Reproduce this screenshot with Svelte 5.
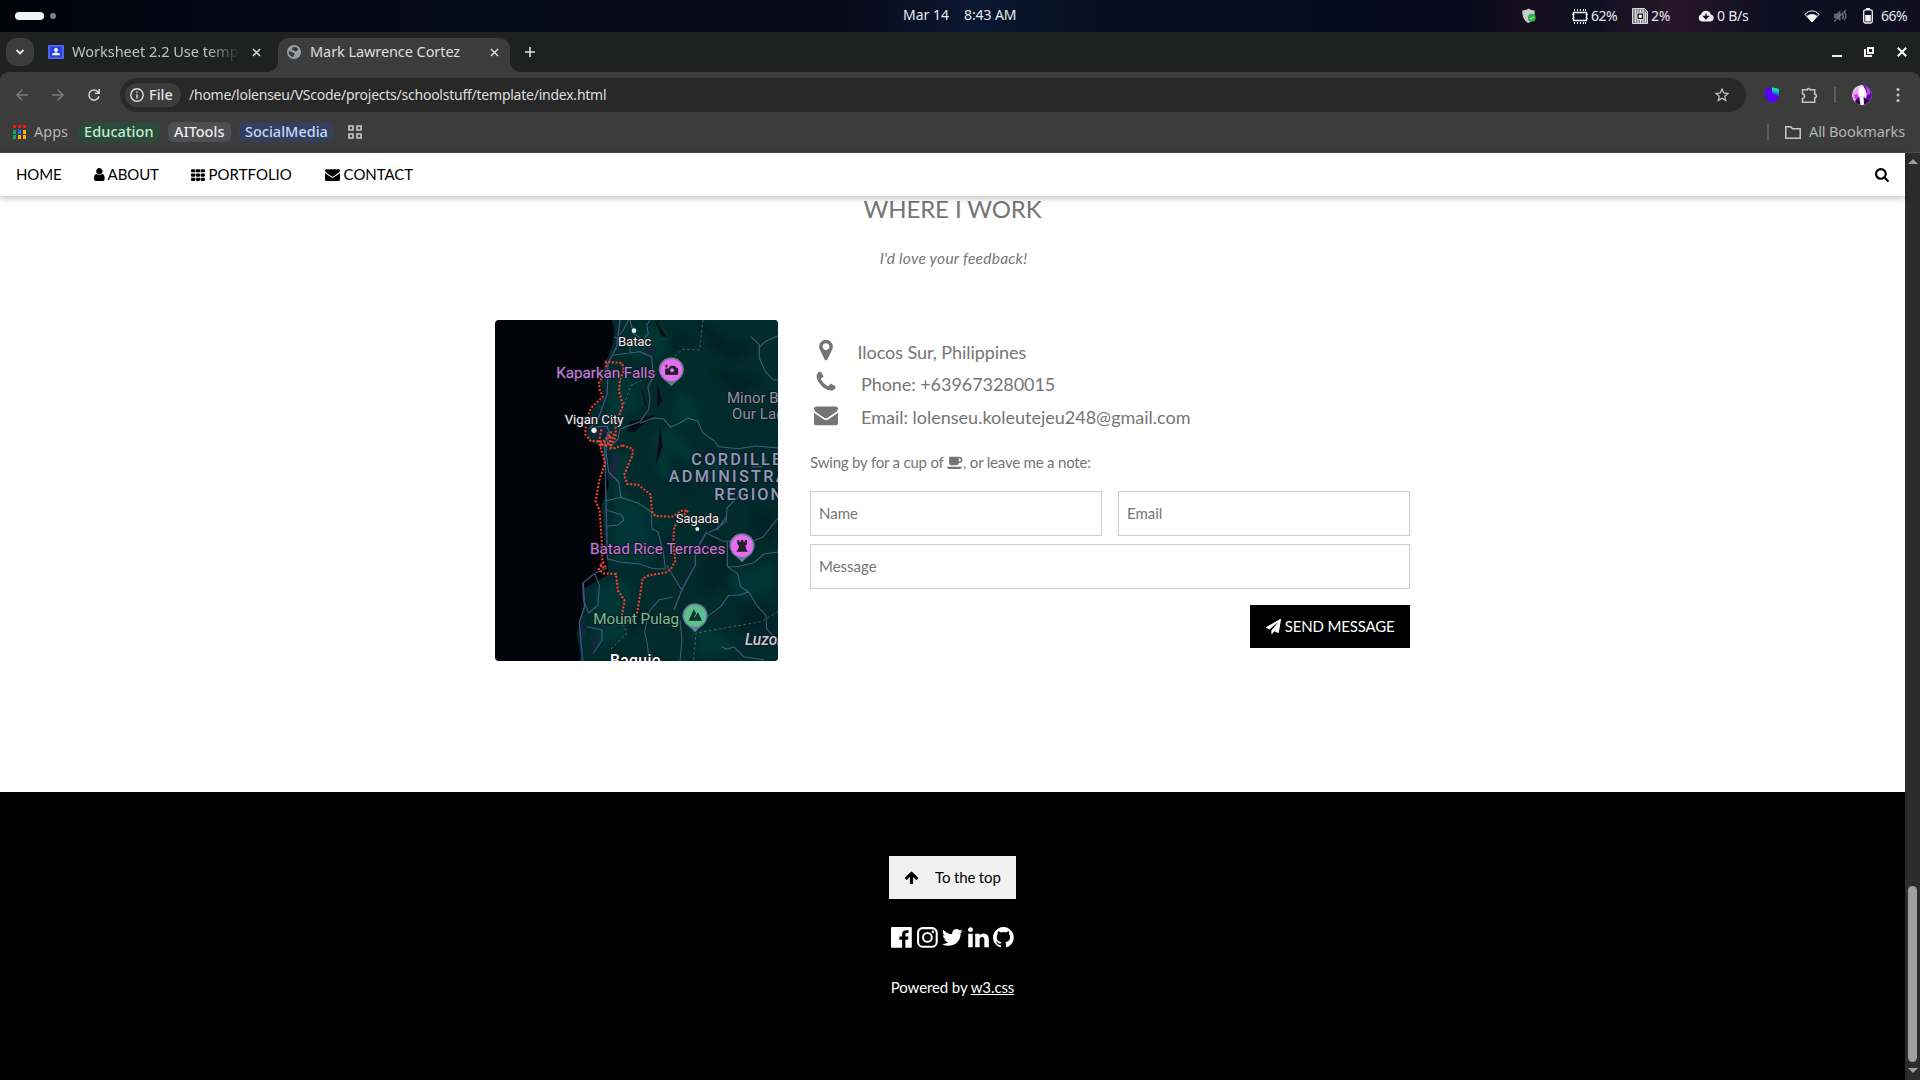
<script>
  const icons = {
    user: { box: '256 0 1280 1792', d: 'M1536 1399q0 109-62.5 187t-150.5 78h-854q-88 0-150.5-78t-62.5-187q0-85 8.5-160.5t31.5-152 58.5-131 94-89 134.5-34.5q131 128 313 128t313-128q76 0 134.5 34.5t94 89 58.5 131 31.5 152 8.5 160.5zm-256-887q0 159-112.5 271.5t-271.5 112.5-271.5-112.5-112.5-271.5 112.5-271.5 271.5-112.5 271.5 112.5 112.5 271.5z' },
    th: { box: '0 0 1664 1792', d: 'M96 256h320q96 0 96 96v192q0 96-96 96h-320q-96 0-96-96v-192q0-96 96-96zM672 256h320q96 0 96 96v192q0 96-96 96h-320q-96 0-96-96v-192q0-96 96-96zM1248 256h320q96 0 96 96v192q0 96-96 96h-320q-96 0-96-96v-192q0-96 96-96zM96 768h320q96 0 96 96v192q0 96-96 96h-320q-96 0-96-96v-192q0-96 96-96zM672 768h320q96 0 96 96v192q0 96-96 96h-320q-96 0-96-96v-192q0-96 96-96zM1248 768h320q96 0 96 96v192q0 96-96 96h-320q-96 0-96-96v-192q0-96 96-96zM96 1280h320q96 0 96 96v192q0 96-96 96h-320q-96 0-96-96v-192q0-96 96-96zM672 1280h320q96 0 96 96v192q0 96-96 96h-320q-96 0-96-96v-192q0-96 96-96zM1248 1280h320q96 0 96 96v192q0 96-96 96h-320q-96 0-96-96v-192q0-96 96-96z' },
    envelope: { box: '0 0 1792 1792', d: 'M1792 710v794q0 66-47 113t-113 47h-1472q-66 0-113-47t-47-113v-794q44 49 101 87 362 246 497 345 57 42 92.5 65.5t94.5 48 110 24.5h2q51 0 110-24.5t94.5-48 92.5-65.5q170-123 498-345 57-39 100-87zm0-294q0 79-49 151t-122 123q-376 261-468 325-10 7-42.5 31t-54 38.5-52 32.5-57.5 27-50 9h-2q-23 0-50-9t-57.5-27-52-32.5-54-38.5-42.5-31q-91-64-262-182.5t-205-142.5q-62-42-117-115.5t-55-136.5q0-78 41.5-130t118.5-52h1472q65 0 112.5 47t47.5 113z' },
    search: { box: '64 0 1664 1792', d: 'M1216 832q0-185-131.5-316.5t-316.5-131.5-316.5 131.5-131.5 316.5 131.5 316.5 316.5 131.5 316.5-131.5 131.5-316.5zm512 832q0 52-38 90t-90 38q-54 0-90-38l-343-342q-179 124-399 124-143 0-273.5-55.5t-225-150-150-225-55.5-273.5 55.5-273.5 150-225 225-150 273.5-55.5 273.5 55.5 225 150 150 225 55.5 273.5q0 220-124 399l343 343q37 37 37 90z' },
    marker: { box: '0 0 1792 1792', d: 'M1152 640q0-106-75-181t-181-75-181 75-75 181 75 181 181 75 181-75 75-181zm256 0q0 109-33 179l-364 774q-16 33-47.5 52t-67.5 19-67.5-19-46.5-52l-365-774q-33-70-33-179 0-212 150-362t362-150 362 150 150 362z' },
    phone: { box: '0 0 1792 1792', d: 'M1600 1240q0 27-10 70.5t-21 68.5q-21 50-122 106-94 51-186 51-27 0-53-3.5t-57.5-12.5-47-14.5-55.5-20.5-49-18q-98-35-175-83-127-79-264-216t-216-264q-48-77-83-175-3-9-18-49t-20.5-55.5-14.5-47-12.5-57.5-3.5-53q0-92 51-186 56-101 106-122 25-11 68.5-21t70.5-10q14 0 21 3 18 6 53 76 11 19 30 54t35 63.5 31 53.5q3 4 17.5 25t21.5 35.5 7 28.5q0 20-28.5 50t-62 55-62 53-28.5 46q0 9 5 22.5t8.5 20.5 14 24 11.5 19q76 137 174 235t235 174q2 1 19 11.5t24 14 20.5 8.5 22.5 5q18 0 46-28.5t53-62 55-62 50-28.5q14 0 28.5 7t35.5 21.5 25 17.5q25 15 53.5 31t63.5 35 54 30q70 35 76 53 3 7 3 21z' },
    coffee: { box: '0 0 1920 1792', d: 'M1664 572q0-80-56-136t-136-56h-64v384h64q80 0 136-56t56-136zm-1664 836h1792q0 106-75 181t-181 75h-1280q-106 0-181-75t-75-181zm1856-832q0 159-112.5 271.5t-271.5 112.5h-64v32q0 92-66 158t-158 66h-704q-92 0-158-66t-66-158v-736q0-26 19-45t45-19h1152q159 0 271.5 112.5t112.5 271.5z' },
    plane: { box: '0 0 1792 1792', d: 'M1764 11q33 24 27 64l-256 1536q-5 29-32 45-14 8-31 8-11 0-24-5l-453-185-242 295q-18 23-49 23-13 0-22-4-19-7-30.5-23.5t-11.5-36.5v-349l864-1059-1069 925-395-162q-37-14-40-55-2-40 32-59l1664-960q15-9 32-9 20 0 36 11z' },
    arrow: { box: '117 0 1558 1792', d: 'M1675 971q0 51-37 90l-75 75q-38 38-91 38-54 0-90-38l-294-293v704q0 52-37.5 84.5t-90.5 32.5h-128q-53 0-90.5-32.5t-37.5-84.5v-704l-294 293q-36 38-90 38t-90-38l-75-75q-38-38-38-90 0-53 38-91l651-651q35-37 90-37 54 0 91 37l651 651q37 39 37 91z' },
    facebook: { box: '128 128 1536 1536', d: 'M1579 128q35 0 60 25t25 60v1366q0 35-25 60t-60 25h-391v-595h199l30-232h-229v-148q0-56 23.5-84t91.5-28l122-1v-207q-63-9-178-9-136 0-217.5 80t-81.5 226v171h-200v232h200v595h-735q-35 0-60-25t-25-60v-1366q0-35 25-60t60-25h1366z' },
    twitter: { box: '108 128 1576 1536', d: 'M1684 408q-67 98-162 167 1 14 1 42 0 130-38 259.5t-115.5 248.5-184.5 210.5-258 146-323 54.5q-271 0-496-145 35 4 78 4 225 0 401-138-105-2-188-64.5t-114-159.5q33 5 61 5 43 0 85-11-112-23-185.5-111.5t-73.5-205.5v-4q68 38 146 41-66-44-105-115t-39-154q0-88 44-163 121 149 294.5 238.5t371.5 99.5q-8-38-8-74 0-134 94.5-228.5t228.5-94.5q140 0 236 102 109-21 205-78-37 115-142 178 93-10 186-50z' },
    linkedin: { box: '0 128 1536 1536', d: 'M349 625v991h-330v-991h330zm21-306q1 73-50.5 122t-135.5 49h-2q-82 0-132-49t-50-122q0-74 51.5-122.5t134.5-48.5 133 48.5 51 122.5zm1166 729v568h-329v-530q0-105-40.5-164.5t-126.5-59.5q-63 0-105.5 34.5t-63.5 85.5q-11 30-11 81v553h-329q2-399 2-647t-1-296l-1-48h329v144h-2q20-32 41-56t56.5-52 87-43.5 114.5-15.5q171 0 275 113.5t104 332.5z' },
    github: { box: '128 128 1536 1536', d: 'M896 128q209 0 385.5 103t279.5 279.5 103 385.5q0 251-146.5 451.5t-378.5 277.5q-27 5-40-7t-13-30q0-3 .5-76.5t.5-134.5q0-97-52-142 57-6 102.5-18t94-39 81-66.5 53-105 20.5-150.5q0-119-79-206 37-91-8-204-28-9-81 11t-92 44l-38 24q-93-26-192-26t-192 26q-16-11-42.5-27t-83.5-38.5-85-13.5q-45 113-8 204-79 87-79 206 0 85 20.5 150t52.5 105 80.5 67 94 39 102.5 18q-39 36-49 103-21 10-45 15t-57 5-65.5-21.5-55.5-62.5q-19-32-48.5-52t-49.5-24l-20-3q-21 0-29 4.5t-5 11.5 9 14 13 12l7 5q22 10 43.5 38t31.5 51l10 23q13 38 44 61.5t67 30 69.5 7 55.5-3.5l23-4q0 38 .5 88.5t.5 54.5q0 18-13 30t-40 7q-232-77-378.5-277.5t-146.5-451.5q0-209 103-385.5t279.5-279.5 385.5-103z' },
  };
  const pins = [
    { x: 574, y: 180, fill: '#e56df0' },
    { x: 786, y: 708, fill: '#e56df0' },
    { x: 645, y: 918, fill: '#5cc08d' },
  ];
</script>

{#snippet icon(name, cls)}
  <svg class="fa {cls}" viewBox={icons[name].box}><path d={icons[name].d} /></svg>
{/snippet}

{#snippet cross()}
  <svg class="cross" viewBox="0 0 10 10"><path d="M1 1l8 8M9 1l-8 8" /></svg>
{/snippet}

<div class="screen">
  <header class="panel">
    <div class="spaces"><i class="pill"></i><i class="dot"></i></div>
    <div class="clock"><span class="date">Mar 14</span><span class="time">8:43 AM</span></div>
    <div class="status">
      <svg class="s-shield" viewBox="0 0 14 16"><path d="M6.500.500C4.800 1.800 2.800 2.400.300 2.500c0 6 1.200 10 6.200 12.500 5-2.500 6.200-6.500 6.200-12.500C10.200 2.400 8.200 1.800 6.500.500z" fill="#c9c9cb" /><circle cx="9.800" cy="9.700" r="3.900" fill="#2fb344" /><path d="M8 9.800l1.400 1.300 2.300-2.500" fill="none" stroke="#d8f5dc" /></svg>
      <svg class="s-chip" viewBox="0 0 16 15"><path d="M1.500 3.500h13v8h-13z" fill="none" stroke="#f2f2f2" stroke-width="1.500" /><path d="M2.500 0v2M5.500 0v2M8.500 0v2M11.500 0v2M13.500 0v2M2.500 13v2M5.500 13v2M8.500 13v2M11.500 13v2M13.500 13v2M0 5.500h2M0 9.500h2M14 5.500h2M14 9.500h2" stroke="#f2f2f2" /></svg>
      <span class="t62">62%</span>
      <svg class="s-mem" viewBox="0 0 16 16"><path d="M.5.500h12l3 3v12H.5z" fill="#85858b" stroke="#d8d8da" /><path d="M3.500 1.500v13M6 1.500v3M8.500 1.500v3M11 1.500v3M6 12v3M8.500 12v3M11 12v3M13.500 4v10.500" stroke="#e3e3e5" /><path d="M5 5h6.500v6.500H5z" fill="#17171f" stroke="#f2f2f2" stroke-width=".8" /><path d="M6.800 6.800h3v3h-3z" fill="#fff" /></svg>
      <span class="t2">2%</span>
      <svg class="s-cloud" viewBox="0 0 16 12"><path d="M4 11.500a3.800 3.800 0 0 1-.8-7.300A5 5 0 0 1 12.800 4.400 3.600 3.600 0 0 1 12.400 11.500z" fill="#f2f2f2" /><path d="M8 3.500v3M5.800 6.500L8 8.900l2.200-2.400z" fill="#0c0f20" stroke="#0c0f20" stroke-width="1.300" /></svg>
      <span class="tbs">0 B/s</span>
      <svg class="s-wifi" viewBox="0 0 16 13"><path d="M.8 4.200Q8-2.600 15.200 4.200L8 12z" fill="none" stroke="#f2f2f2" stroke-width="1" /><path d="M2.800 6Q8 2.200 13.200 6L8 12.500z" fill="#f2f2f2" /></svg>
      <svg class="s-mute" viewBox="0 0 16 15"><path d="M1 5h3l4-4v12L4 10H1z" fill="#66666f" /><path d="M1 13.500L14 1M10 5q2 3 0 6M12 3q3.500 4.500 0 9" fill="none" stroke="#77777f" stroke-width="1.300" /></svg>
      <svg class="s-bat" viewBox="0 0 10 16"><path d="M3 0h4v2H3z" fill="#f2f2f2" /><rect x=".7" y="1.800" width="8.600" height="13.200" rx="1.800" fill="none" stroke="#f2f2f2" stroke-width="1.300" /><path d="M2.200 7h5.600v6.500H2.200z" fill="#f2f2f2" /></svg>
      <span class="t66">66%</span>
    </div>
  </header>

  <div class="tabs">
    <button class="drop" aria-label="Tabs"><svg viewBox="0 0 10 6"><path d="M1.500 1L5 4.500 8.500 1" /></svg></button>
    <div class="tab idle">
      <svg class="favicon" viewBox="0 0 16 14"><rect width="16" height="14" rx="1" fill="#4a68f5" /><path d="M1.800 1.800h12.400v10.400H1.800z" fill="#2b44d8" /><circle cx="8" cy="5" r="1.900" fill="#fff" /><path d="M4 10.300q0-2.800 4-2.800t4 2.800z" fill="#fff" /></svg>
      <span class="title one">Worksheet 2.2 Use temp</span>
      {@render cross()}
    </div>
    <div class="tab active">
      <svg class="globe" viewBox="0 0 14 14"><circle cx="7" cy="7" r="7" fill="#9aa0a6" /><path d="M1.500 6.200q3 0 4 1.200 1.800.2 2.400 1.600l-1.200 1.200.2 1.700Q2 12 1.500 6.200zM6.500 1.800q3.500.2 5.200 2.400-1.300.3-1.600 1.500-1 1.200-2.700.4Q6 4.800 4.700 4.500 5.200 2.700 6.500 1.800z" fill="#3c3c3c" /></svg>
      <span class="title two">Mark Lawrence Cortez</span>
      {@render cross()}
    </div>
    <svg class="plus" viewBox="0 0 10 10"><path d="M5 0v10M0 5h10" /></svg>
    <div class="win">
      <svg viewBox="0 0 10 10"><path d="M0 9h10" stroke-width="2" /></svg>
      <svg viewBox="0 0 10 10"><path d="M4 1h5v5H4zM1 2v7h7" stroke-width="2" /></svg>
      <svg viewBox="0 0 10 10"><path d="M.8.800l8.400 8.400M9.200.800L.8 9.200" stroke-width="2.100" /></svg>
    </div>
  </div>

  <div class="chrome">
    <div class="toolbar">
      <svg class="nv dim" viewBox="0 0 12 12"><path d="M12 6H1M6.300.700L1 6l5.300 5.300" /></svg>
      <svg class="nv dim" viewBox="0 0 12 12"><path d="M0 6h11M5.700.700L11 6l-5.300 5.300" /></svg>
      <svg class="nv" viewBox="0 0 12 12"><path d="M10.300 3.200A5.100 5.100 0 1 0 11 7.200M11.200 0v4.200H7" /></svg>
      <div class="omni">
        <span class="chip"><svg viewBox="0 0 14 14"><circle cx="7" cy="7" r="6.200" /><path d="M7 6.200v4.300M7 3.500v1.500" /></svg><span>File</span></span>
        <span class="url">/home/lolenseu/VScode/projects/schoolstuff/template/index.html</span>
        <svg class="star" viewBox="0 0 24 24"><path d="M22 9.240l-7.190-.62L12 2 9.190 8.630 2 9.240l5.460 4.730L5.820 21 12 17.270 18.180 21l-1.630-7.030L22 9.240zM12 15.400l-3.760 2.270 1-4.280-3.320-2.880 4.380-.38L12 6.100l1.710 4.040 4.380.38-3.320 2.880 1 4.280L12 15.400z" /></svg>
      </div>
      <svg class="ext" viewBox="0 0 14 16"><path d="M7 .500L0 2v6q0 5 7 8 7-3 7-8V2z" fill="#5a00ff" /><path d="M7 .500l7 1.500v6.800L7 6z" fill="#1874d4" /><path d="M7 .500l7 1.500v4.500L7 4.500z" fill="#10b8b8" /><path d="M7 .500l7 1.500v2L7 3z" fill="#12e88c" /></svg>
      <svg class="puzzle" viewBox="0 0 17 17"><path d="M1.500 2.800h4.800a1.300 1.300 0 0 1 2.600 0h4.800v4.500a1.600 1.600 0 0 1 0 3.400v4.500H1.500v-3.700q2.200-.7 2.200-2.300T1.500 6.800z" /></svg>
      <i class="sep"></i>
      <svg class="avatar" viewBox="0 0 20 20"><defs><clipPath id="face"><circle cx="10" cy="10" r="10" /></clipPath></defs><g clip-path="url(#face)"><path d="M0 0h20v20H0z" fill="#efcff6" /><path d="M11 0h9v20h-6q2-4 0-7 2-4-1-9z" fill="#5a0a9e" /><path d="M13 1q6 3 5 8l-3 1q1-5-2-9z" fill="#c84be8" /><path d="M1 8l5-6 0 6 2 5-2 6-5-5z" fill="#e7a7ee" /><path d="M2 10l3-1 2 5-3 1z" fill="#d32be0" /><path d="M3 16l4-4 1.500 8H5zM11.500 12l4.500 3-2 5-2 0z" fill="#280049" /><ellipse cx="10" cy="6.800" rx="3" ry="5" fill="#fff" /><path d="M8.500 20l.5-9h2l.8 9z" fill="#fff" /></g></svg>
      <svg class="more" viewBox="0 0 4 16"><circle cx="2" cy="2.500" r="1.500" /><circle cx="2" cy="8" r="1.500" /><circle cx="2" cy="13.500" r="1.500" /></svg>
    </div>
    <div class="marks">
      <svg class="apps" viewBox="0 0 13 14"><path d="M0 0h3v3H0zM5 0h3v3H5zM10 0h3v3h-3z" fill="#f01818" /><path d="M0 5h3v4H0zM0 10h3v4H0z" fill="#12a860" /><path d="M5 5h3v4H5z" fill="#1a78f5" /><path d="M10 5h3v4h-3zM5 10h3v4H5zM10 10h3v4h-3z" fill="#ffb000" /></svg>
      <span class="t-apps">Apps</span>
      <span class="group g1">Education</span>
      <span class="group g2">AITools</span>
      <span class="group g3">SocialMedia</span>
      <svg class="grid4" viewBox="0 0 14 14"><path d="M1 1h4v4H1zM9 1h4v4H9zM1 9h4v4H1zM9 9h4v4H9z" /></svg>
      <i class="sep end"></i>
      <svg class="folder" viewBox="0 0 16 13"><path d="M.8.800h5l1.600 1.900h7.800v9.500H.8z" /></svg>
      <span class="t-all">All Bookmarks</span>
    </div>
  </div>

  <div class="view">
    <div class="page">
      <nav>
        <a class="n1" href="#home">HOME</a>
        <a class="n2" href="#about">{@render icon('user', 'w-user')} ABOUT</a>
        <a class="n3" href="#portfolio">{@render icon('th', 'w-th')} PORTFOLIO</a>
        <a class="n4" href="#contact">{@render icon('envelope', 'w-env')} CONTACT</a>
        <a class="find" href="#search" aria-label="Search">{@render icon('search', 'w-search')}</a>
      </nav>
      <main>
        <h3>WHERE I WORK</h3>
        <p class="lead"><em>I'd love your feedback!</em></p>
        <div class="row">
          <svg class="map" viewBox="45 30 849 1023">
            <defs><filter id="soft"><feGaussianBlur stdDeviation="9" /></filter></defs>
            <path d="M45 30h849v1023H45z" fill="#03040a" />
            <path d="M395 30l8 25-3 45-20 50-20 60 10 50-35 40-15 60 5 30 40 20 10 65 12 50-22 60 6 90 12 90 0 30-70 40-5 70-18 65 12 67-5 16h607V30z" fill="#022b2c" />
            <g fill="#013d3b" opacity=".6" filter="url(#soft)">
              <path d="M430 50l50 10 40-10 60 30-30 60-90 10zM400 190l70 10 20 90-70 40-40 40-5-60zM400 420l60 20-40 100 60 40 90 70-60 110-110 10zM345 830l95-20 40 70-50 110-90 20zM520 370l60-20 60 80-30 90-80-20zM740 800l140-40v80l-100 30zM590 240l60 30 20 70-90-10zM690 440l60 30-20 50-50-20zM620 940l90 20 60 60-110 20z" />
            </g>
            <g fill="#011a20" opacity=".6" filter="url(#soft)">
              <path d="M660 40l80 50 80 20-60 40-60-30zM700 170l90 30 50 10-80 40zM570 430l50 40 10 80-50-60zM500 620l60 50-20 60zM690 640l60 90-20 90-60 30zM820 590l60 30v80l-60-30zM460 860l40 60-50 60zM790 880l90 30v70l-100-20zM560 90l50-20 20 40z" />
            </g>
            <g fill="#090c14"><path d="M525 30l35 50-15 0zM485 235l18 60-10-12zM532 215l14 60-14 20zM450 335l80-22-50 38-15 15-22-2zM540 350l8 60-22 60 8-55z" /></g>
            <g fill="#1b2541" opacity=".9"><path d="M508 108l18 8-14 26-12-12zM398 432l20 6-6 48-18 22-10-5zM300 940l14-8 6 40-14 5zM340 980l14-8-5 42-14 10zM335 350l50 2-4 20-44 6z" /></g>
            <g class="roads">
              <path d="M445 30l-15 30-12 15M402 80l48 22 0 30M400 135l80-10 35 15 5 60-16 30 6 40-5 30-25 35-60 22-6 30-20 20M340 352l40-4 8 18-10 60 8 60 30 30 8 50M450 30l10 40 30 20 15-20-5-25 10-15M480 340l40-16 30 2 22 26 28-14 24-14 30 10 14 34 36 26 10 16 62 6 50-8 68 6M812 80l26 24 0 40 18 40 24 26 14 0M835 115l20-20 39-18M420 562l56 18 38 26 2 50 18 10 16 60 6 50-36 0-40-14-60-6-40-10M378 600l46 14 8 16-20 16-34 3M378 572l20-4 28-8M560 765l45 75M815 470l30 0 14-24M775 560l-34 34-2 40-36 26-18 8M680 670l50 24 90-2 30-12 44-56M742 694l0 76 30 0 50-12 30-26 42-6M742 770l30 20 10 40 24 16 24 40 28 30 2 40 34 38M806 846l-30 10-30 0-24 34-40 30M380 775l-34 14-38 30 2 50 16 40 28-24 4-60-14-34M320 950l46 10 0 30-26 40M508 1053l-6-50-8-40 14-60 30-34 40-8M725 1010l16 8 20-8 30 30 60 10M600 930l6 60-6 63" />
            </g>
            <g class="coast"><path d="M420 30l-10 80-26 50-2 90-27 75-25 30M384 366l-10 40 3 120 5 220M310 820l4 70-16 46 10 117M680 665l-34 60 0 40-40 74-24 60M710 660l30-40" /></g>
            <g class="trail"><path d="M669 30l-10 90-52-2-32 30M500 205l-46 20-24 60-30 60M894 905l-50 30-196 34-8 84M430 940l10 30-50 50" /></g>
            <path class="border" d="M374 155l52 4 6 20-12 30-3 35 12 42-14 36-8 18 0 40-16 30 0 10M428 406l30 10 0 20-10 20-16 40 10 26 32 2 38 30 4 50 10 14 50 2 30-18 18 0-20 20-22 30-2 50 6 50-14 26-16 10-50 8-18 10-8 50-8 50-10 26-32 0-4-20 8-40-20-30-6-50-38-2-14-12 12-16-3-74-6-86-12-28 10-60 18-54-18-64 8-42M378 155l0 30-20 30 0 20 10 26-34 32-16 40-2 40 16 20 40 2 18-20 0 24-30 8 34-40 8 8-18 32-24-2M395 380l-6 30 10 6 29-10M372 755l-10 10 10 10 6-8" />
            <g class="town">
              <circle cx="462" cy="62" r="7" /><circle cx="342" cy="361" r="8" /><circle cx="652" cy="657" r="6" />
              <text x="414" y="109" textLength="100">Batac</text>
              <text x="254" y="342" textLength="177">Vigan City</text>
              <text x="587" y="640" textLength="130">Sagada</text>
            </g>
            <g class="area">
              <text x="741" y="280" textLength="155">Minor B</text>
              <text x="756" y="326" textLength="158">Our Lad</text>
            </g>
            <g class="region">
              <text x="634" y="464" textLength="270">CORDILLE</text>
              <text x="566" y="517" textLength="354">ADMINISTRA</text>
              <text x="703" y="570" textLength="203">REGION</text>
            </g>
            <g class="poi">
              <text x="229" y="203" textLength="297">Kaparkan Falls</text>
              <text x="330" y="731" textLength="406">Batad Rice Terraces</text>
              <text class="green" x="340" y="941" textLength="257">Mount Pulag</text>
            </g>
            <text class="luzon" x="795" y="1004" textLength="122">Luzon</text>
            <text class="baguio" x="390" y="1068" textLength="152">Baguio</text>
            {#each pins as p}
              <path d="M{p.x - 38} {p.y}a38 38 0 1 1 76 0q-2 22-25 36l-13 13-13-13q-23-14-25-36z" fill="#6c7896" />
              <circle cx={p.x} cy={p.y} r="33" fill={p.fill} />
            {/each}
            <path d="M557 177h10l4-8h14l4 6h4v18h-36zM559 163v10M554 168h10" fill="#232029" stroke="#232029" stroke-width="3" />
            <circle cx="576" cy="181" r="6" fill="#e56df0" />
            <path d="M772 690h6v5h5v-5h7v5h5v-5h6v13l-5 4 2 9 6 9h-35l6-9 2-9-5-4z" fill="#232029" />
            <path d="M626 932l15-34 8 13 5-4 12 25z" fill="#10352c" /><path d="M651 909l-8 12" stroke="#5cc08d" stroke-width="3" />
          </svg>
          <div class="contact">
            <div class="line">{@render icon('marker', 'big')}<span class="place">Ilocos Sur, Philippines</span></div>
            <div class="line">{@render icon('phone', 'big')}<span>Phone: +639673280015</span></div>
            <div class="line">{@render icon('envelope', 'big')}<span class="mail">Email: lolenseu.koleutejeu248@gmail.com</span></div>
            <p>Swing by for a cup of {@render icon('coffee', 'cup')}, or leave me a note:</p>
            <form>
              <input placeholder="Name" />
              <input placeholder="Email" />
              <input class="wide" placeholder="Message" />
              <button type="button">{@render icon('plane', 'w-plane')} SEND MESSAGE</button>
            </form>
          </div>
        </div>
      </main>
      <footer>
        <a class="top" href="#home">{@render icon('arrow', 'w-arrow')}<span>To the top</span></a>
        <div class="social">
          {@render icon('facebook', 'soc')}
          <svg class="soc" viewBox="0 0 21 21"><rect x="1.100" y="1.100" width="18.800" height="18.800" rx="4.600" fill="none" stroke="#fff" stroke-width="2.100" /><circle cx="10.500" cy="10.500" r="4.400" fill="none" stroke="#fff" stroke-width="2" /><circle cx="16.100" cy="4.900" r="1.300" /></svg>
          {@render icon('twitter', 'soc')}
          {@render icon('linkedin', 'soc')}
          {@render icon('github', 'soc')}
        </div>
        <p>Powered by <a href="#w3">w3.css</a></p>
      </footer>
    </div>
    <div class="scroll">
      <i class="up"></i>
      <i class="thumb"></i>
      <i class="down"></i>
    </div>
  </div>
</div>

<style>
  :global(body) { margin: 0; overflow: hidden; }
  * { box-sizing: border-box; }
  svg { display: block; flex: none; overflow: visible; }
  i { display: block; flex: none; }
  .screen { width: 1920px; height: 1080px; display: flex; flex-direction: column; overflow: hidden; font: 14.5px/20px "Noto Sans", sans-serif; }
  .screen span { white-space: nowrap; }

  .panel { height: 32px; flex: none; display: grid; grid-template-columns: 903px 120px 1fr; align-items: center; color: #e8e8ea; font-size: 14px;
    background: linear-gradient(90deg, #02030b 0, #030a18 500px, #060815 820px, #0a1730 970px, #051022 1080px, #04091a 1450px, #160e1f 1530px, #0d0f20 1590px, #29152a 1670px, #0c0e20 1770px, #100d20 100%); }
  .spaces { display: flex; align-items: center; gap: 6px; padding-left: 15px; }
  .pill { width: 29px; height: 8px; border-radius: 4px; background: #f4f4f4; }
  .dot { width: 6px; height: 6px; border-radius: 3px; background: #808086; }
  .clock { display: flex; padding-bottom: 2px; }
  .date { width: 61px; } .time { letter-spacing: -.1px; }
  .status { display: flex; align-items: center; }
  .status span { padding-bottom: 1px; }
  .s-shield { width: 14px; height: 16px; margin-left: 499px; margin-right: 36px; }
  .s-chip { width: 16px; height: 15px; }
  .t62 { margin-left: 3px; width: 41px; letter-spacing: -.5px; }
  .s-mem { width: 16px; height: 16px; }
  .t2 { margin-left: 3px; width: 47px; letter-spacing: -.3px; }
  .s-cloud { width: 16px; height: 12px; }
  .tbs { margin-left: 3px; width: 87px; letter-spacing: -.25px; }
  .s-wifi { width: 16px; height: 13px; }
  .s-mute { width: 15px; height: 14px; margin-left: 13px; }
  .s-bat { width: 10px; height: 16px; margin-left: 15px; }
  .t66 { margin-left: 8px; letter-spacing: -.5px; }

  .tabs { height: 40px; flex: none; display: flex; background: #1f2120; padding: 6px 13px 0 6px; color: #c3c3c3; }
  .drop { width: 28px; height: 28px; border: 0; border-radius: 10px; background: #3c3c3c; padding: 0; display: grid; place-items: center; }
  .drop svg { width: 10px; height: 6px; fill: none; stroke: #e6e6e6; stroke-width: 1.800; }
  .tab { height: 34px; display: flex; align-items: center; padding-bottom: 6px; }
  .idle { width: 244px; padding-left: 14px; }
  .favicon { width: 16px; height: 14px; }
  .title { flex: none; overflow: hidden; padding-bottom: 2px; }
  .one { width: 168px; margin: 0 12px 0 8px; -webkit-mask-image: linear-gradient(90deg, #000 135px, transparent 168px); mask-image: linear-gradient(90deg, #000 135px, transparent 168px); }
  .two { width: 170px; margin: 0 10px 0 9px; color: #dedede; letter-spacing: -.08px; }
  .cross { width: 9px; height: 9px; fill: none; stroke: #dedede; stroke-width: 1.600; }
  .active { position: relative; width: 232px; padding-left: 9px; background: #3c3c3c; border-radius: 10px 10px 0 0; }
  .active::before, .active::after { content: ''; position: absolute; bottom: 0; width: 10px; height: 10px; }
  .active::before { left: -10px; background: radial-gradient(circle at 0 0, transparent 9.500px, #3c3c3c 10px); }
  .active::after { right: -10px; background: radial-gradient(circle at 100% 0, transparent 9.500px, #3c3c3c 10px); }
  .globe { width: 14px; height: 14px; }
  .plus { width: 10px; height: 10px; margin: 9px 0 0 15px; stroke: #dedede; stroke-width: 1.600; fill: none; }
  .win { margin: 9px 0 0 auto; display: flex; gap: 23px; }
  .win svg { width: 10px; height: 10px; stroke: #f0f0f0; fill: none; }
  .win svg:first-child { margin-right: -1px; }

  .chrome { height: 81px; flex: none; background: radial-gradient(circle at 8px 8px, #3c3c3c 7.500px, #1f2120 8px) 0 0/8px 8px no-repeat, radial-gradient(circle at 0 8px, #3c3c3c 7.500px, #1f2120 8px) 100% 0/8px 8px no-repeat, #3c3c3c; border-bottom: 1px solid #4b4b4b; }
  .toolbar { display: flex; align-items: center; height: 46px; padding-left: 16px; }
  .nv { width: 12px; height: 12px; margin-right: 24px; fill: none; stroke: #d0d0d0; stroke-width: 1.500; }
  .dim { stroke: #7e7e7e; }
  .omni { width: 1626px; height: 34px; margin-left: -4px; border-radius: 17px; background: #282828; display: flex; align-items: center; padding: 0 15px 0 5px; color: #dedede; flex: none; }
  .chip { width: 56px; height: 24px; border-radius: 12px; background: #3c3c3c; display: flex; align-items: center; gap: 5px; padding-left: 5px; color: #e3e3e3; font-weight: 500; flex: none; }
  .chip span { padding-bottom: 2px; }
  .chip svg { width: 14px; height: 14px; stroke: #dedede; stroke-width: 1.400; fill: none; }
  .url { margin-left: 8px; flex: 1; font-size: 14px; letter-spacing: -.24px; }
  .star { width: 18px; height: 18px; fill: #c7c7c7; }
  .ext { width: 14px; height: 16px; margin: 0 22px 0 19px; }
  .puzzle { width: 17px; height: 17px; fill: none; stroke: #c7c7c7; stroke-width: 1.500; }
  .sep { width: 2px; height: 16px; background: #5c5c5c; margin-left: 16px; }
  .avatar { width: 20px; height: 20px; margin: 0 24px 0 16px; }
  .more { width: 4px; height: 16px; fill: #c7c7c7; }
  .marks { display: flex; align-items: center; height: 28px; padding-left: 13px; color: #b5b5b5; }
  .apps { width: 13px; height: 14px; }
  .t-apps { width: 36px; margin: 0 8px; padding-bottom: 2px; }
  .group { height: 20px; border-radius: 6px; padding-left: 6px; line-height: 18px; font-weight: 500; margin-right: 8px; flex: none; }
  .g1 { width: 82px; background: #2b4a3b; color: #bfeccb; letter-spacing: .08px; }
  .g2 { width: 63px; background: #4d4f52; color: #ececec; }
  .g3 { width: 94px; background: #343f5c; color: #c3d6ff; }
  .grid4 { width: 14px; height: 14px; margin-left: 7px; fill: none; stroke: #c7c7c7; stroke-width: 1.700; }
  .end { margin-left: auto; }
  .folder { width: 16px; height: 13px; margin: 0 8px 0 16px; fill: none; stroke: #c7c7c7; stroke-width: 1.500; }
  .t-all { width: 111px; letter-spacing: -.12px; padding-bottom: 2px; }

  .view { flex: 1; display: flex; min-height: 0; font: 15px/27px Lato, sans-serif; }
  .page { width: 1905px; background: #fff; display: flex; flex-direction: column; }
  .page a { color: inherit; text-decoration: none; }
  .fa { display: inline-block; height: 15px; fill: currentColor; }
  nav { height: 43px; flex: none; display: flex; color: #000; background: #fff; box-shadow: 0 2px 5px rgba(0,0,0,.16), 0 2px 10px rgba(0,0,0,.12); position: relative; }
  nav a { padding: 8px 16px; white-space: nowrap; letter-spacing: -.1px; }
  nav .fa { vertical-align: -2px; }
  .w-user { width: 10.700px; } .w-th { width: 13.930px; } .w-env { width: 15px; } .w-search { width: 13.930px; }
  .n3 { letter-spacing: 0; }
  .n4 { letter-spacing: -.05px; margin-left: 1px; }
  .find { margin-left: auto; }
  main { height: 596px; flex: none; color: #757575; }
  h3 { margin: 0; height: 26px; font: 400 24px/26px Lato, sans-serif; letter-spacing: -.12px; text-align: center; }
  .lead { margin: 23px 0 0; text-align: center; font-size: 15.500px; letter-spacing: .25px; padding-left: 2px; }
  .row { display: flex; margin: 48px 0 0 495px; }
  .map { width: 283px; height: 341px; border-radius: 4px; overflow: hidden; font-family: Roboto, sans-serif; }
  .roads path { fill: none; stroke: #4f6587; stroke-width: 3.200; stroke-linejoin: round; opacity: .85; }
  .coast path { fill: none; stroke: #42537e; stroke-width: 4; stroke-linejoin: round; }
  .trail path { fill: none; stroke: #53666e; stroke-width: 2.500; stroke-dasharray: 8 7; }
  .border { fill: none; stroke: #f0402e; stroke-width: 6.500; stroke-dasharray: 6 5; }
  .map text { paint-order: stroke; stroke: #151a22; stroke-width: 6px; stroke-linejoin: round; }
  .town { fill: #f0f0f0; font-size: 40px; }
  .area { fill: #8792a2; font-size: 45px; }
  .region { fill: #8c9abb; font-size: 49px; font-weight: 500; }
  .poi { fill: #c979dc; font-size: 46px; }
  .green { fill: #6fbf8b; }
  .luzon { fill: #c6c9cf; font-size: 47px; font-style: italic; font-weight: 500; }
  .baguio { fill: #fff; font-size: 47px; font-weight: 500; }
  .contact { width: 600px; margin-left: 32px; padding-top: 16px; }
  .line { height: 32.400px; display: flex; font-size: 18px; line-height: 32.400px; }
  .big { width: 24px; height: 24px; margin: 2px 0 0 4px; }
  .line span { margin-left: 23px; letter-spacing: -.06px; }
  .line .place { margin-left: 19.500px; }
  .line .mail { letter-spacing: 0; }
  .contact p { margin: 16px 0 15px; white-space: nowrap; letter-spacing: -.2px; }
  .cup { width: 16px; vertical-align: -2px; }
  form { display: grid; grid-template-columns: 292px 292px; column-gap: 16px; row-gap: 8px; }
  input { width: 100%; height: 45px; border: 1px solid #ccc; padding: 7px 8px 9px; font: 15px Lato, sans-serif; background: #fff; min-width: 0; }
  input::placeholder { color: #757575; opacity: 1; }
  .wide { grid-column: 1 / 3; }
  form button { grid-column: 2; justify-self: end; margin-top: 8px; width: 160px; height: 43px; border: 0; background: #000; color: #fff; padding: 0 16px; font: 15px/27px Lato, sans-serif; white-space: nowrap; text-align: left; letter-spacing: -.15px; }
  .w-plane { width: 15px; vertical-align: -2px; }
  footer { flex: 1; background: #000; color: #fff; display: flex; flex-direction: column; align-items: center; padding-top: 64px; }
  footer .top { width: 127px; height: 43px; background: #f1f1f1; color: #000; display: flex; align-items: center; padding-left: 16px; letter-spacing: -.15px; }
  .w-arrow { width: 13.040px; }
  .top span { margin-left: 17px; }
  .social { display: flex; gap: 4.800px; margin: 28px 0 0; }
  .soc { width: 20.800px; height: 20.800px; fill: #fff; }
  footer p { margin: 26px 0 0; letter-spacing: -.1px; }
  .page footer p a { text-decoration: underline; }

  .scroll { width: 15px; background: #2c2c2c; display: flex; flex-direction: column; align-items: center; }
  .up { margin-top: 6px; border: 5px solid transparent; border-top: 0; border-bottom-color: #9f9f9f; }
  .thumb { width: 9px; height: 176px; border-radius: 5px; background: #9f9f9f; margin-top: auto; }
  .down { margin: 6px 0 7px; border: 5px solid transparent; border-bottom: 0; border-top-color: #9f9f9f; }
</style>
